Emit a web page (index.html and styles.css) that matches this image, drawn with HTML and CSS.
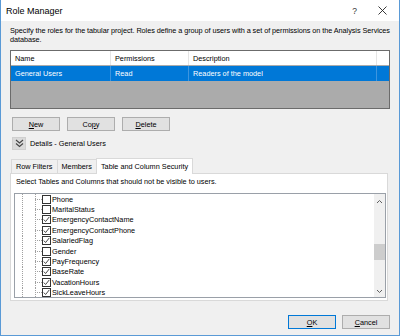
FILE: index.html
```html
<!DOCTYPE html>
<html>
<head>
<meta charset="utf-8">
<link rel="stylesheet" href="styles.css">
</head>
<body>
<div class="window">
  <div class="titlebar">
    <span class="title">Role Manager</span>
    <span class="help">?</span>
    <svg class="close" width="9" height="9" viewBox="0 0 9 9"><path d="M0.5 0.5 L8.5 8.5 M8.5 0.5 L0.5 8.5" stroke="#222" stroke-width="0.9"/></svg>
  </div>
  <div class="content">
    <p class="desc">Specify the roles for the tabular project. Roles define a group of users with a set of permissions on the Analysis Services database.</p>
    <div class="grid">
      <div class="grow head">
        <span class="c1">Name</span><span class="c2">Permissions</span><span class="c3">Description</span><span class="c4"></span>
      </div>
      <div class="grow sel">
        <span class="c1">General Users</span><span class="c2">Read</span><span class="c3">Readers of the model</span><span class="c4"></span>
      </div>
      <div class="empty"></div>
    </div>
    <div class="btnrow">
      <button class="btn"><u>N</u>ew</button>
      <button class="btn">Co<u>p</u>y</button>
      <button class="btn"><u>D</u>elete</button>
    </div>
    <div class="details">
      <span class="dicon"><svg width="9" height="9" viewBox="0 0 9 9"><path d="M1 1 L4.5 4 L8 1 M1 4.5 L4.5 7.5 L8 4.5" fill="none" stroke="#444" stroke-width="1.1"/></svg></span>
      <span>Details - General Users</span>
    </div>
    <div class="tabs">
      <span class="tab">Row Filters</span>
      <span class="tab">Members</span>
      <span class="tab active">Table and Column Security</span>
    </div>
    <div class="panel">
      <p class="hint">Select Tables and Columns that should not be visible to users.</p>
      <div class="tree">
        <div class="rows">
          <div class="row"><span class="g1"></span><span class="elbow"></span><span class="cb"></span><span class="lbl">Phone</span></div>
          <div class="row"><span class="g1"></span><span class="elbow"></span><span class="cb"></span><span class="lbl">MaritalStatus</span></div>
          <div class="row"><span class="g1"></span><span class="elbow"></span><span class="cb on"></span><span class="lbl">EmergencyContactName</span></div>
          <div class="row"><span class="g1"></span><span class="elbow"></span><span class="cb on"></span><span class="lbl">EmergencyContactPhone</span></div>
          <div class="row"><span class="g1"></span><span class="elbow"></span><span class="cb on"></span><span class="lbl">SalariedFlag</span></div>
          <div class="row"><span class="g1"></span><span class="elbow"></span><span class="cb"></span><span class="lbl">Gender</span></div>
          <div class="row"><span class="g1"></span><span class="elbow"></span><span class="cb on"></span><span class="lbl">PayFrequency</span></div>
          <div class="row"><span class="g1"></span><span class="elbow"></span><span class="cb on"></span><span class="lbl">BaseRate</span></div>
          <div class="row"><span class="g1"></span><span class="elbow"></span><span class="cb on"></span><span class="lbl">VacationHours</span></div>
          <div class="row"><span class="g1"></span><span class="elbow"></span><span class="cb on"></span><span class="lbl">SickLeaveHours</span></div>
        </div>
        <div class="vscroll">
          <svg width="7" height="5" viewBox="0 0 7 5"><path d="M1 4 L3.5 1.5 L6 4" fill="none" stroke="#606060" stroke-width="1"/></svg>
          <div class="track"><div class="thumb"></div></div>
          <svg width="7" height="5" viewBox="0 0 7 5"><path d="M1 1 L3.5 3.5 L6 1" fill="none" stroke="#606060" stroke-width="1"/></svg>
        </div>
      </div>
    </div>
    <div class="footer">
      <button class="btn default"><u>O</u>K</button>
      <button class="btn"><u>C</u>ancel</button>
    </div>
  </div>
</div>
</body>
</html>
```
FILE: styles.css
```css
* { box-sizing: border-box; }
html, body { margin: 0; padding: 0; }
body {
  width: 400px;
  height: 336px;
  font-family: "Liberation Sans", Arial, sans-serif;
  font-size: 7.3px;
  color: #000;
  background: #f0f0f0;
}
.window {
  width: 400px;
  height: 336px;
  border-left: 1px solid #5a9ad6;
  border-right: 1px solid #5a9ad6;
  border-bottom: 1px solid #5a9ad6;
  background: #f0f0f0;
  display: flex;
  flex-direction: column;
}
.titlebar {
  height: 21px;
  background: #fff;
  display: flex;
  align-items: center;
  padding-left: 5px;
  flex: none;
}
.title { font-size: 9px; flex: 1; }
.help { font-size: 8.5px; color: #333; margin-right: 21px; }
.close { margin-right: 12px; }
.content {
  padding: 0 9px;
  display: flex;
  flex-direction: column;
  flex: 1;
}
.desc {
  margin: 6px 0 0 0;
  line-height: 8.5px;
  height: 17px;
  letter-spacing: -0.06px;
}
.grid {
  margin-top: 6px;
  border: 1px solid #6b6b6b;
  height: 59px;
  display: flex;
  flex-direction: column;
  background: #ababab;
}
.grow {
  display: flex;
  flex: none;
}
.grow span { padding-left: 4px; white-space: nowrap; overflow: hidden; }
.head { height: 14px; background: #fff; align-items: center; }
.head span { border-right: 1px solid #e5e5e5; height: 100%; display: flex; align-items: center; }
.sel { height: 15px; background: #0078d7; color: #fff; margin-top: 1px; }
.sel span { border-right: 1px solid #3d95df; height: 100%; display: flex; align-items: center; }
.c1 { width: 100px; }
.c2 { width: 78px; }
.c3 { width: 188px; }
.c4 { flex: 1; border-right: none !important; }
.btnrow {
  display: flex;
  gap: 7px;
  margin-top: 8px;
  padding-left: 2px;
}
.btn {
  width: 48px;
  height: 14px;
  border: 1px solid #adadad;
  background: #e1e1e1;
  font-family: inherit;
  font-size: 7.3px;
  color: #000;
  padding: 0;
  margin: 0;
  display: flex;
  align-items: center;
  justify-content: center;
}
.btn u { text-decoration-thickness: 1px; text-underline-offset: 1px; }
.details {
  display: flex;
  align-items: center;
  gap: 4px;
  margin-top: 6px;
  padding-left: 2px;
  height: 13px;
}
.dicon {
  width: 14px;
  height: 13px;
  background: #dadada;
  border: 1px solid #cfcfcf;
  display: flex;
  align-items: center;
  justify-content: center;
}
.tabs {
  display: flex;
  align-items: flex-end;
  margin-top: 7px;
  padding-left: 1px;
  height: 16px;
}
.tab {
  height: 14px;
  border: 1px solid #d9d9d9;
  border-bottom: none;
  border-right: none;
  padding: 0 4px;
  display: flex;
  align-items: center;
  background: #f0f0f0;
}
.tab.active {
  height: 16px;
  background: #fff;
  border-right: 1px solid #d9d9d9;
  position: relative;
  z-index: 1;
  margin-bottom: -1px;
  padding: 0 4px;
}
.panel {
  background: #fff;
  border: 1px solid #d9d9d9;
  height: 128px;
  margin-right: 2px;
  padding: 0 1px 2px 3px;
  display: flex;
  flex-direction: column;
}
.hint {
  margin: 3px 0 0 2px;
  height: 16px;
  line-height: 10px;
}
.tree {
  flex: 1;
  border: 1px solid #9aa0a8;
  display: flex;
  overflow: hidden;
}
.rows { flex: 1; padding-top: 0; }
.row {
  height: 10.4px;
  display: flex;
  align-items: center;
  padding-left: 7px;
}
.g1 {
  width: 13px;
  height: 100%;
  background: linear-gradient(to bottom, #a0a0a0 50%, transparent 50%) left top / 1px 2px repeat-y;
}
.elbow {
  width: 7px;
  height: 100%;
  background:
    linear-gradient(to bottom, #a0a0a0 50%, transparent 50%) left top / 1px 2px repeat-y,
    linear-gradient(to right, #a0a0a0 50%, transparent 50%) left center / 2px 1px repeat-x;
}
.cb {
  width: 9px;
  height: 9px;
  border: 1px solid #333;
  background: #fff;
  flex: none;
}
.cb.on {
  background: #fff url("data:image/svg+xml,%3Csvg xmlns='http://www.w3.org/2000/svg' width='7' height='7' viewBox='0 0 7 7'%3E%3Cpath d='M0.8 3.6 L2.6 5.5 L6.3 0.9' fill='none' stroke='%23333' stroke-width='0.9'/%3E%3C/svg%3E") center / 7px 7px no-repeat;
}
.lbl { padding-left: 1px; white-space: nowrap; }
.vscroll {
  width: 11px;
  background: #f0f0f0;
  display: flex;
  flex-direction: column;
  align-items: center;
  padding: 5px 0 3px;
}
.track { flex: 1; width: 100%; padding-top: 40px; }
.thumb { height: 16px; background: #cdcdcd; width: 100%; }
.footer {
  display: flex;
  justify-content: flex-end;
  gap: 6px;
  margin-top: 14px;
}
.btn.default { border-color: #0078d7; }
```
